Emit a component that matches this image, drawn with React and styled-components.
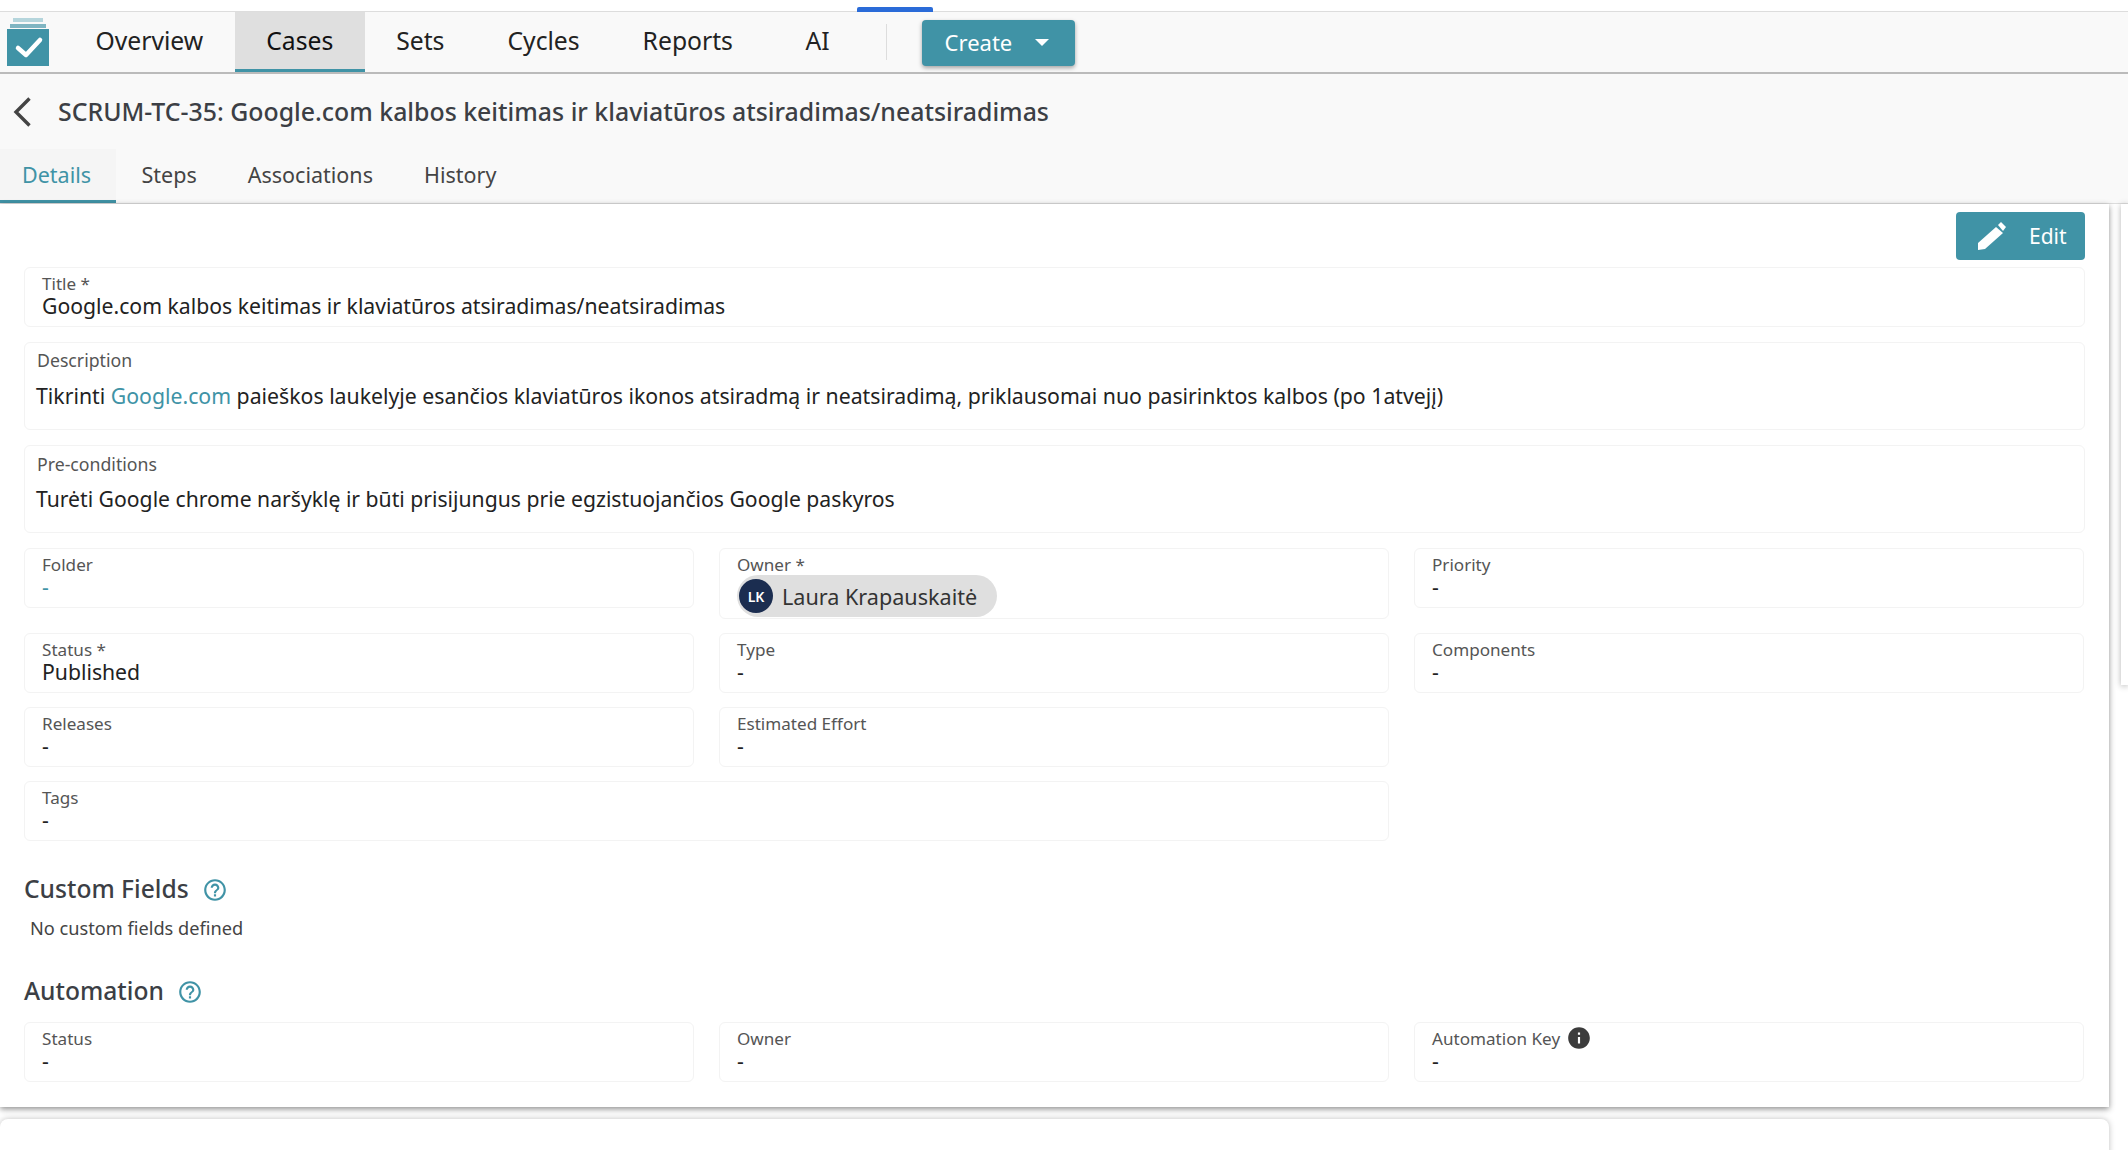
import React from "react";
import styled, { createGlobalStyle } from "styled-components";

const TEAL = "#4093a6";

const Global = createGlobalStyle`
  html, body { margin: 0; padding: 0; background: #fff; }
  body { font-family: "Noto Sans", "Open Sans", sans-serif; color: #222; }
  * { box-sizing: border-box; }
`;

const Page = styled.div`
  width: 2128px;
  height: 1150px;
  overflow: hidden;
  background: #fff;
`;

const TopStrip = styled.div`
  height: 12px;
  padding-left: 857px;
  display: flex;
  align-items: flex-end;
  background: #fff;
  border-bottom: 1px solid #ddd;
`;

const Indicator = styled.div`
  width: 76px;
  height: 5px;
  background: #2a6bd8;
  border-radius: 2px 2px 0 0;
  margin-bottom: -1px;
`;

const Nav = styled.nav`
  height: 62px;
  display: flex;
  align-items: stretch;
  background: #f9f9f9;
  border-bottom: 2px solid #bbb;
`;

const LogoBox = styled.div`
  width: 64px;
  padding: 6px 0 0 7px;
  flex: none;
`;

const NavTab = styled.div`
  display: flex;
  align-items: center;
  padding: 0 ${(p) => (p.$wide ? 41 : 31.5)}px;
  font-size: 24.7px;
  color: ${(p) => (p.$active ? "#111" : "#222")};
  background: ${(p) => (p.$active ? "#dfdfdf" : "transparent")};
  border-bottom: 3px solid ${(p) => (p.$active ? TEAL : "transparent")};
`;

const NavDivider = styled.div`
  width: 1px;
  height: 36px;
  margin: 12px 35px 0 15px;
  background: #ddd;
`;

const CreateButton = styled.div`
  width: 153px;
  height: 46px;
  margin-top: 8px;
  padding: 0 0 2px 23px;
  display: flex;
  align-items: center;
  font-size: 22px;
  color: #fff;
  background: ${TEAL};
  border-radius: 4px;
  box-shadow: 0 2px 4px rgba(0, 0, 0, 0.35);
`;

const Caret = styled.span`
  width: 0;
  height: 0;
  margin-left: 23px;
  border-left: 7.5px solid transparent;
  border-right: 7.5px solid transparent;
  border-top: 7px solid #fff;
`;

const Header = styled.header`
  background: #f9f9f9;
  border-bottom: 1px solid #ddd;
`;

const TitleRow = styled.div`
  height: 75px;
  display: flex;
  align-items: center;
  padding: 0 0 2px 13px;
`;

const BackIcon = styled.svg`
  width: 18px;
  height: 30px;
  margin: 2px 27px 0 0;
  flex: none;
`;

const PageTitle = styled.h1`
  margin: 0;
  font-size: 24.87px;
  font-weight: 500;
  color: #3c3f45;
`;

const TabRow = styled.div`
  height: 54px;
  display: flex;
`;

const SubTab = styled.div`
  display: flex;
  align-items: center;
  padding: 0 ${(p) => (p.$active ? "24.5px" : "25px")} 0 ${(p) => (p.$active ? "22px" : "26px")};
  font-size: 21.5px;
  color: ${(p) => (p.$active ? TEAL : "#444")};
  background: ${(p) => (p.$active ? "#f5f5f5" : "transparent")};
  border-bottom: 3px solid ${(p) => (p.$active ? TEAL : "transparent")};
`;

const Body = styled.div`
  display: flex;
  align-items: flex-start;
  gap: 12px;
`;

const MainColumn = styled.div`
  width: 2109px;
  flex: none;
`;

const Sheet = styled.section`
  height: 903px;
  padding: 8px 24px 0;
  background: #fff;
  box-shadow: 0 2px 6px rgba(0, 0, 0, 0.45);
`;

const NextSheet = styled.section`
  height: 60px;
  margin-top: 12px;
  background: #fff;
  border-radius: 8px 8px 0 0;
  box-shadow: 0 0 6px rgba(0, 0, 0, 0.25);
`;

const SidePanel = styled.aside`
  flex: 1;
  height: 481px;
  background: #fff;
  box-shadow: 0 1px 6px rgba(0, 0, 0, 0.3);
`;

const ActionRow = styled.div`
  display: flex;
  justify-content: flex-end;
  margin-bottom: 7px;
`;

const EditButton = styled.div`
  width: 129px;
  height: 48px;
  padding: 0 0 0 22px;
  display: flex;
  align-items: center;
  gap: 23px;
  font-size: 21px;
  color: #fff;
  background: ${TEAL};
  border-radius: 4px;
`;

const Field = styled.div`
  min-height: 60px;
  padding: 4px 16px 1px 17px;
  background: #fff;
  border: 1px solid #f3f3f3;
  border-radius: 6px;
  margin-bottom: ${(p) => p.$mb ?? 0}px;
  grid-column: ${(p) => p.$span ?? "auto"};
`;

const RichField = styled(Field)`
  min-height: 88px;
  padding: ${(p) => p.$top ?? 6}px 12px 0;
  margin-bottom: 15px;
`;

const Label = styled.div`
  display: flex;
  align-items: center;
  gap: 6px;
  height: 22px;
  font-size: ${(p) => (p.$rich ? 17.7 : 17.1)}px;
  color: #555;
`;

const Value = styled.div`
  font-size: 21.2px;
  line-height: 24px;
  color: ${(p) => (p.$link ? TEAL : "#222")};
`;

const RichValue = styled.div`
  margin: ${(p) => p.$gap ?? 11}px 0 0 -1px;
  font-size: ${(p) => p.$size}px;
  line-height: 28px;
  color: #222;
`;

const InlineLink = styled.span`
  color: ${TEAL};
`;

const Grid = styled.div`
  display: grid;
  grid-template-columns: repeat(3, 1fr);
  column-gap: 25px;
  row-gap: 14px;
  align-items: start;
  margin-right: 1px;
`;

const AutomationGrid = styled(Grid)`
  margin-top: 16px;
`;

const OwnerField = styled(Field)`
  min-height: 71px;
`;

const Chip = styled.div`
  display: inline-flex;
  align-items: center;
  height: 42px;
  padding: 0 20px 0 2px;
  gap: 9px;
  background: #dfdfdf;
  border-radius: 21px;
  font-size: 21.6px;
  color: #333;
`;

const Avatar = styled.span`
  width: 34px;
  height: 34px;
  border-radius: 50%;
  display: flex;
  align-items: center;
  justify-content: center;
  font-size: 14px;
  font-weight: 600;
  color: #fff;
  background: #1b2d50;
`;

const SectionHead = styled.h2`
  display: flex;
  align-items: center;
  gap: 13px;
  margin: ${(p) => p.$top}px 0 0;
  height: 32px;
  font-size: 24.6px;
  font-weight: 500;
  color: #3c3f45;
`;

const Empty = styled.div`
  margin: 11px 0 0 6px;
  font-size: 18.2px;
  line-height: 26px;
  color: #444;
`;

const HelpIcon = styled.svg`
  width: 26px;
  height: 26px;
  fill: ${TEAL};
  margin-top: 3px;
`;

const InfoIcon = styled.svg`
  width: 26px;
  height: 26px;
  fill: #3c3c3c;
`;

const Help = () => (
  <HelpIcon viewBox="0 0 24 24">
    <path d="M11 18h2v-2h-2v2zm1-16C6.48 2 2 6.48 2 12s4.48 10 10 10 10-4.48 10-10S17.52 2 12 2zm0 18c-4.41 0-8-3.59-8-8s3.59-8 8-8 8 3.59 8 8-3.59 8-8 8zm0-14c-2.21 0-4 1.79-4 4h2c0-1.1.9-2 2-2s2 .9 2 2c0 2-3 1.75-3 5h2c0-2.25 3-2.5 3-5 0-2.21-1.79-4-4-4z" />
  </HelpIcon>
);

const Logo = () => (
  <svg width="42" height="48" viewBox="0 0 42 48">
    <rect x="6" y="0" width="30" height="4" fill="#b5d5dc" />
    <rect x="3" y="6" width="36" height="4" fill="#7fb5c2" />
    <rect x="0" y="11" width="42" height="37" fill={TEAL} />
    <path d="M11 30l8 7 14-15" fill="none" stroke="#fff" strokeWidth="4.5" strokeLinecap="round" strokeLinejoin="round" />
  </svg>
);

const Pencil = () => (
  <svg width="28" height="28" viewBox="0 0 28 28" fill="#fff">
    <polygon points="0,21 18,5 25,11 7,27 0,28" />
    <polygon points="20,3 23,0 28,5 25,9" />
  </svg>
);

const Simple = ({ label, value, link, span }) => (
  <Field $span={span}>
    <Label>{label}</Label>
    <Value $link={link}>{value}</Value>
  </Field>
);

export default function App() {
  return (
    <Page>
      <Global />
      <TopStrip>
        <Indicator />
      </TopStrip>
      <Nav>
        <LogoBox>
          <Logo />
        </LogoBox>
        <NavTab>Overview</NavTab>
        <NavTab $active>Cases</NavTab>
        <NavTab>Sets</NavTab>
        <NavTab>Cycles</NavTab>
        <NavTab>Reports</NavTab>
        <NavTab $wide>AI</NavTab>
        <NavDivider />
        <CreateButton>
          Create
          <Caret />
        </CreateButton>
      </Nav>
      <Header>
        <TitleRow>
          <BackIcon viewBox="0 0 18 30">
            <path d="M16.5 1.5L3 15l13.5 13.5" fill="none" stroke="#444" strokeWidth="3.4" />
          </BackIcon>
          <PageTitle>SCRUM-TC-35: Google.com kalbos keitimas ir klaviatūros atsiradimas/neatsiradimas</PageTitle>
        </TitleRow>
        <TabRow>
          <SubTab $active>Details</SubTab>
          <SubTab>Steps</SubTab>
          <SubTab>Associations</SubTab>
          <SubTab>History</SubTab>
        </TabRow>
      </Header>
      <Body>
        <MainColumn>
          <Sheet>
            <ActionRow>
              <EditButton>
                <Pencil />
                Edit
              </EditButton>
            </ActionRow>
            <Field $mb={15}>
              <Label>Title *</Label>
              <Value>Google.com kalbos keitimas ir klaviatūros atsiradimas/neatsiradimas</Value>
            </Field>
            <RichField>
              <Label $rich>Description</Label>
              <RichValue $size={21.26}>
                Tikrinti <InlineLink>Google.com</InlineLink> paieškos laukelyje esančios klaviatūros ikonos atsiradmą ir neatsiradimą, priklausomai nuo pasirinktos kalbos (po 1atvejį)
              </RichValue>
            </RichField>
            <RichField $top={7}>
              <Label $rich>Pre-conditions</Label>
              <RichValue $size={21.17} $gap={10}>
                Turėti Google chrome naršyklę ir būti prisijungus prie egzistuojančios Google paskyros
              </RichValue>
            </RichField>
            <Grid>
              <Simple label="Folder" value="-" link />
              <OwnerField>
                <Label>Owner *</Label>
                <Chip>
                  <Avatar>LK</Avatar>
                  Laura Krapauskaitė
                </Chip>
              </OwnerField>
              <Simple label="Priority" value="-" />
              <Simple label="Status *" value="Published" />
              <Simple label="Type" value="-" />
              <Simple label="Components" value="-" />
              <Simple label="Releases" value="-" />
              <Simple label="Estimated Effort" value="-" />
              <div />
              <Simple label="Tags" value="-" span="span 2" />
            </Grid>
            <SectionHead $top={31}>
              Custom Fields
              <Help />
            </SectionHead>
            <Empty>No custom fields defined</Empty>
            <SectionHead $top={33}>
              Automation
              <Help />
            </SectionHead>
            <AutomationGrid>
              <Simple label="Status" value="-" />
              <Simple label="Owner" value="-" />
              <Field>
                <Label>
                  Automation Key
                  <InfoIcon viewBox="0 0 24 24">
                    <path d="M12 2C6.48 2 2 6.48 2 12s4.48 10 10 10 10-4.48 10-10S17.52 2 12 2zm1 15h-2v-6h2v6zm0-8h-2V7h2v2z" />
                  </InfoIcon>
                </Label>
                <Value>-</Value>
              </Field>
            </AutomationGrid>
          </Sheet>
          <NextSheet />
        </MainColumn>
        <SidePanel />
      </Body>
    </Page>
  );
}
